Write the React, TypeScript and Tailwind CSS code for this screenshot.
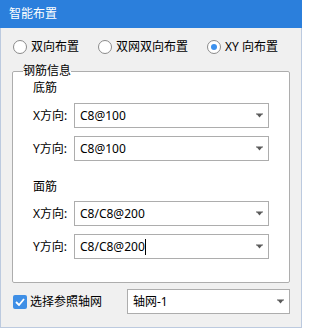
import React from 'react';

const font = "font-['Noto_Sans','Noto_Sans_CJK_SC',sans-serif]";

const Arrow = () => (
  <svg width="7" height="5" viewBox="0 0 7 5" className="shrink-0">
    <path d="M0 0.5h7v1H0z M1 1.5h5L3.5 4.5z" fill="#5a5a5a" />
  </svg>
);

const Radio = ({ label, checked }: { label: string; checked?: boolean }) => (
  <label className="flex items-center gap-[4px]">
    <span className="w-[14px] h-[14px] rounded-full border border-[#8a8a8a] bg-white flex items-center justify-center">
      {checked && <span className="w-[6px] h-[6px] rounded-full bg-[#3c91ee]" />}
    </span>
    <span className="leading-[16px]">{label}</span>
  </label>
);

const Combo = ({ value, caret, className = '' }: { value: string; caret?: boolean; className?: string }) => (
  <div className={`h-[25px] border border-[#adadad] bg-white flex items-center pl-[5px] pr-[5px] ${className}`}>
    <span className="flex-1 flex items-center leading-[16px] text-black">
      {value}
      {caret && <span className="w-px h-[16px] bg-black" />}
    </span>
    <Arrow />
  </div>
);

const Row = ({ label, value, caret }: { label: string; value: string; caret?: boolean }) => (
  <div className="flex items-center">
    <span className="w-[41px] leading-[16px]">{label}</span>
    <Combo value={value} caret={caret} className="flex-1" />
  </div>
);

export default function App() {
  return (
    <div className={`w-[302px] h-[328px] bg-[#f0f0f0] border-x border-b border-[#bccadf] flex flex-col text-[12px] text-black ${font}`}>
      <div className="h-[28px] bg-[#2b7fdc] -mx-px flex items-center pl-[9px] text-white text-[12px]">
        智能布置
      </div>

      <div className="px-[11px] flex flex-col">
        <div className="flex items-center gap-[19px] pl-[1px] mt-[11px] h-[16px]">
          <Radio label="双向布置" />
          <Radio label="双网双向布置" />
          <Radio label="XY 向布置" checked />
        </div>

        <fieldset className="mt-[8px] border border-[#adadad] rounded-[2px] bg-white px-0 pb-[23px]">
          <legend className="ml-[10px] leading-[16px] px-0">钢筋信息</legend>
          <div className="px-[20px]">
            <div className="leading-[16px] mt-[1px]">底筋</div>
            <div className="flex flex-col gap-[8px] mt-[7px]">
              <Row label="X方向:" value="C8@100" />
              <Row label="Y方向:" value="C8@100" />
            </div>
            <div className="leading-[16px] mt-[18px]">面筋</div>
            <div className="flex flex-col gap-[8px] mt-[6px]">
              <Row label="X方向:" value="C8/C8@200" />
              <Row label="Y方向:" value="C8/C8@200" caret />
            </div>
          </div>
        </fieldset>

        <div className="flex items-center mt-[6px]">
          <label className="flex items-center gap-[3px] w-[115px] pl-[1px]">
            <span className="w-[14px] h-[14px] rounded-[2px] bg-[#3f8fe6] flex items-center justify-center">
              <svg width="10" height="8" viewBox="0 0 10 8">
                <path d="M1 4l3 3 5-6" stroke="white" strokeWidth="1.8" fill="none" />
              </svg>
            </span>
            <span className="leading-[16px]">选择参照轴网</span>
          </label>
          <Combo value="轴网-1" className="flex-1 pl-[4px] pr-[4px]" />
        </div>
      </div>
    </div>
  );
}
